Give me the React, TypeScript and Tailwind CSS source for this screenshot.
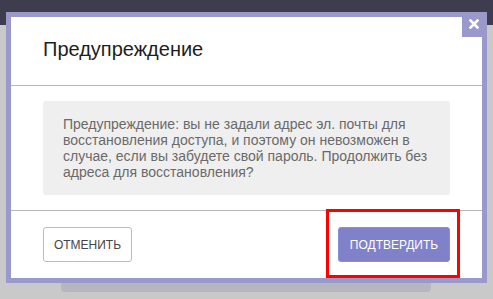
export default function App() {
  return (
    <div className="relative w-[493px] h-[299px] overflow-hidden bg-[#c9c9c9] font-['Liberation_Sans',Arial,sans-serif]">
      {/* page header behind the overlay */}
      <div className="h-[25px] bg-[#3e3d4f]" />

      {/* card peeking out under the dialog */}
      <div className="absolute left-[61px] top-[270px] w-[370px] h-[22px] rounded-b-[4px] bg-[#b6b6be]" />

      {/* dialog */}
      <div className="absolute left-[6px] top-[12px] w-[481px] h-[271px] border-[5px] border-[#9999cc] bg-white flex flex-col">
        <button className="absolute right-0 top-0 w-[20px] h-[20px] bg-[#9999cc] flex items-start justify-end pt-[2px] pr-[3px]">
          <svg width="10" height="10" viewBox="0 0 10 10">
            <path d="M1.5 1.5 L8.5 8.5 M8.5 1.5 L1.5 8.5" stroke="white" strokeWidth="2.6" strokeLinecap="square" />
          </svg>
        </button>

        <div className="pt-[21px] pb-[25px] pl-[32px] border-b border-[#b5b5b5]">
          <h2 className="text-[20px] leading-[22px] text-[#1e1e1e]">Предупреждение</h2>
        </div>

        <div className="px-[32px] pt-[15px] pb-[15px] border-b border-[#b5b5b5]">
          <div className="rounded-[3px] bg-[#efefef] px-[20px] py-[15px] text-[14px] leading-[16px] text-[#6a6a6a] whitespace-nowrap">
            Предупреждение: вы не задали адрес эл. почты для
            <br />
            восстановления доступа, и поэтому он невозможен в
            <br />
            случае, если вы забудете свой пароль. Продолжить без
            <br />
            адреса для восстановления?
          </div>
        </div>

        <div className="flex justify-between items-center px-[32px] pt-[16px] pb-[16px]">
          <button className="h-[35px] w-[89px] rounded-[3px] border border-[#bdbdbd] bg-white text-[12px] text-[#444] uppercase">
            Отменить
          </button>
          <button className="h-[35px] w-[112px] rounded-[3px] border border-[#7f90dc] bg-[#8181c9] text-[12px] text-white uppercase">
            Подтвердить
          </button>
        </div>
      </div>

      {/* annotation highlight */}
      <div className="absolute left-[326px] top-[209px] w-[134px] h-[69px] border-[3px] border-[#ff0000]" />
    </div>
  );
}
